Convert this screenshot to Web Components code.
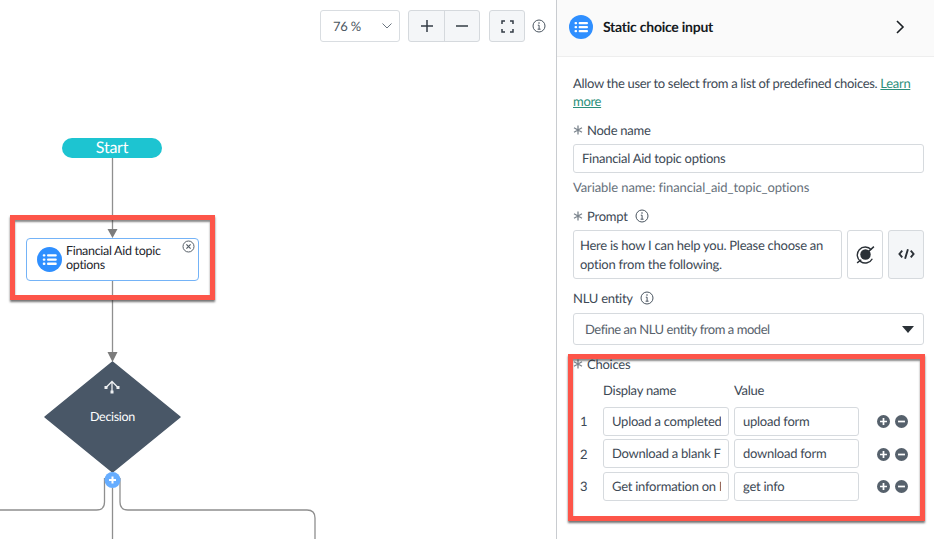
<!DOCTYPE html>
<html>
<head>
<meta charset="utf-8">
<title>Static choice input</title>
<style>
  html, body { margin: 0; height: 539px; overflow: hidden; background: #fff; }
  body { font-family: Lato, Roboto, sans-serif; color: #3d4955; letter-spacing: -0.25px; text-rendering: geometricPrecision; }
</style>
</head>
<body>
<dialog-builder></dialog-builder>
<script>
const LIST_ICON = `
  <svg viewBox="0 0 24 24" width="100%" height="100%">
    <circle cx="12" cy="12" r="12" fill="#2f8fff"/>
    <g fill="#fff">
      <rect x="5.5" y="7" width="2.6" height="2.2" rx="1"/>
      <rect x="5.5" y="11" width="2.6" height="2.2" rx="1"/>
      <rect x="5.5" y="15" width="2.6" height="2.2" rx="1"/>
      <rect x="9.6" y="7" width="9.4" height="2.2" rx="1"/>
      <rect x="9.6" y="11" width="9.4" height="2.2" rx="1"/>
      <rect x="9.6" y="15" width="9.4" height="2.2" rx="1"/>
    </g>
  </svg>`;

const INFO_ICON = `
  <svg viewBox="0 0 14 14" width="14" height="14" fill="none" stroke="#4a5560" stroke-width="1">
    <circle cx="7" cy="7" r="6"/>
    <path d="M5.8 6.2H7.1V10.2M5.6 10.2H8.6" />
    <circle cx="7" cy="4" r=".8" fill="#4a5560" stroke="none"/>
  </svg>`;

const ASTERISK = `
  <svg viewBox="0 0 10 10" width="10" height="10" stroke="#7b848d" stroke-width="1.3">
    <path d="M5 .5V9.5M1 2.7L9 7.3M9 2.7L1 7.3"/>
  </svg>`;

class ZoomToolbar extends HTMLElement {
  constructor() {
    super();
    this.attachShadow({ mode: 'open' });
    this.shadowRoot.innerHTML = `
      <style>
        :host { display: flex; align-items: center; position: absolute; top: 10px; right: 10px; font-size: 13px; color: #4a5560; }
        .zoom {
          box-sizing: border-box; width: 80px; height: 32px; margin-right: 8px;
          border: 1px solid #d9dde1; border-radius: 3px; background: #fff;
          display: flex; align-items: center; justify-content: space-between; padding: 0 6px 0 12px;
        }
        .group { display: flex; height: 32px; box-sizing: border-box; border: 1px solid #d5d9dd; border-radius: 3px; background: #f4f6f8; margin-right: 9px; }
        .btn { box-sizing: border-box; width: 35px; display: flex; align-items: center; justify-content: center; }
        .btn + .btn { border-left: 1px solid #d5d9dd; }
        .info { display: flex; margin-left: 7px; }
      </style>
      <div class="zoom"><span>76 %</span>
        <svg width="12" height="8" viewBox="0 0 12 8" fill="none" stroke="#6b7580" stroke-width="1"><path d="M1.5 1.5L6 6L10.5 1.5"/></svg>
      </div>
      <div class="group">
        <div class="btn"><svg width="14" height="14" viewBox="0 0 14 14" stroke="#333c45" stroke-width="1.5"><path d="M7 1V13M1 7H13"/></svg></div>
        <div class="btn"><svg width="14" height="14" viewBox="0 0 14 14" stroke="#333c45" stroke-width="1.5"><path d="M1 7H13"/></svg></div>
      </div>
      <div class="group" style="margin-right:0;width:36px">
        <div class="btn" style="width:34px"><svg width="13" height="13" viewBox="0 0 13 13" fill="none" stroke="#333c45" stroke-width="1.5"><path d="M1 4V1H4M9 1H12V4M12 9V12H9M4 12H1V9"/></svg></div>
      </div>
      <span class="info">${INFO_ICON}</span>
    `;
  }
}

class FlowNode extends HTMLElement {
  constructor() {
    super();
    this.attachShadow({ mode: 'open' });
    this.shadowRoot.innerHTML = `
      <style>
        :host {
          display: flex; align-items: center; gap: 4px; box-sizing: border-box;
          position: absolute; left: 26px; top: 238px; width: 173px; height: 43px; padding: 0 20px 0 10px;
          background: #fff; border: 1px solid #74b3f7; border-radius: 4px;
          font-size: 12.5px; letter-spacing: -0.3px; line-height: 14px; color: #1d252c;
        }
        .icon { width: 25px; height: 25px; flex: none; }
        .text { margin-top: -3px; }
        .close { position: absolute; right: 3px; top: 1px; width: 13px; height: 13px; }
      </style>
      <span class="icon">${LIST_ICON}</span>
      <span class="text"><slot></slot></span>
      <svg class="close" viewBox="0 0 13 13" fill="none" stroke="#555e67"><circle cx="6.5" cy="6.5" r="5.5"/><path stroke-width="1.2" d="M4.4 4.4L8.6 8.6M8.6 4.4L4.4 8.6"/></svg>
    `;
  }
}

class FlowCanvas extends HTMLElement {
  constructor() {
    super();
    this.attachShadow({ mode: 'open' });
    this.shadowRoot.innerHTML = `
      <style>
        :host { display: block; position: relative; flex: none; width: 556px; height: 539px; background: #fff; overflow: hidden; }
        svg.wires { position: absolute; left: 0; top: 0; }
        .start {
          position: absolute; left: 62px; top: 138px; width: 100px; height: 20px; border-radius: 10px;
          background: #1dc4d1; color: #fff; font-size: 16px; line-height: 19px; text-align: center;
        }
        .label { position: absolute; left: 45px; top: 408px; width: 135px; text-align: center; color: #fff; font-size: 12.5px; letter-spacing: -0.3px; line-height: 18px; }
      </style>
      <svg class="wires" width="556" height="539" fill="none">
        <g stroke="#8f8f8f" stroke-width="1.3">
          <path d="M112.5 157V232M112.5 280V354M112.5 488V539"/>
          <path d="M104.5 478V502Q104.5 510 96.5 510H0"/>
          <path d="M120 478V502Q120 510 128 510H307Q315 510 315 518V539"/>
        </g>
        <path d="M107.5 229L112.5 238L117.5 229ZM107.5 352L112.5 362L117.5 352Z" fill="#7c7c7c"/>
        <path d="M112.5 362L180 417L112.5 472L45 417Z" fill="#495767" stroke="#495767" stroke-width="1.5" stroke-linejoin="round"/>
        <g stroke="#eef0f2" stroke-width="1.3" fill="none">
          <path d="M112 381V392M106 387.5L112 381.5L118 387.5"/>
        </g>
        <g fill="#eef0f2">
          <rect x="104.5" y="386" width="3" height="3"/><rect x="116.5" y="386" width="3" height="3"/><rect x="110.5" y="390.5" width="3" height="3"/>
        </g>
        <circle cx="112.5" cy="480" r="8" fill="#66adff"/>
        <path d="M112.5 476.5V483.5M109 480H116" stroke="#fff" stroke-width="2"/>
      </svg>
      <div class="start">Start</div>
      <div class="label">Decision</div>
      <flow-node>Financial Aid topic options</flow-node>
      <call-out style="left:10px;top:215px;width:205px;height:85px"></call-out>
      <zoom-toolbar></zoom-toolbar>
    `;
  }
}

class CallOut extends HTMLElement {
  constructor() {
    super();
    this.attachShadow({ mode: 'open' });
    this.shadowRoot.innerHTML = `
      <style>
        :host {
          display: block; position: absolute; box-sizing: border-box; pointer-events: none;
          border: 5px solid #fd5549; box-shadow: 0 2px 2px rgba(40,40,40,.65), inset 0 2px 2px rgba(40,40,40,.55);
        }
      </style>`;
  }
}

class FormLabel extends HTMLElement {
  constructor() {
    super();
    this.attachShadow({ mode: 'open' });
    this.shadowRoot.innerHTML = `
      <style>
        :host { display: flex; align-items: center; font-size: 13px; line-height: 18px; color: #3d4955; }
        .req { display: none; margin-right: 4px; }
        :host([required]) .req { display: flex; }
        .info { display: none; margin-left: 7px; }
        :host([info]) .info { display: flex; }
      </style>
      <span class="req">${ASTERISK}</span><slot></slot><span class="info">${INFO_ICON}</span>
    `;
  }
}

class TextBox extends HTMLElement {
  constructor() {
    super();
    this.attachShadow({ mode: 'open' });
    this.shadowRoot.innerHTML = `
      <style>
        :host {
          display: block; box-sizing: border-box; background: #fff; border: 1px solid #d6dade; border-radius: 3px;
          padding: 5px 7px 5px 8px; font-size: 13px; line-height: 17px; color: #3d4955;
        }
        :host([single]) .clip { white-space: nowrap; overflow: hidden; }
      </style>
      <div class="clip"><slot></slot></div>
    `;
  }
}

class ChoiceRow extends HTMLElement {
  constructor() {
    super();
    this.attachShadow({ mode: 'open' });
    const sign = d => `<svg width="13" height="13" viewBox="0 0 12 12"><circle cx="6" cy="6" r="6" fill="#56616c"/><path d="${d}" stroke="#fff" stroke-width="1.6"/></svg>`;
    this.shadowRoot.innerHTML = `
      <style>
        :host { display: grid; grid-template-columns: 30px 126px 130px 18px 13px 5px 13px; align-items: center; height: 29px; font-size: 13px; color: #3d4955; }
        .num { padding-left: 7px; }
        text-box { height: 29px; }
        .val { margin-left: 5px; }
        svg { display: block; margin-top: 1px; }
        .a { grid-column: 5; }
        .b { grid-column: 7; }
      </style>
      <span class="num">${this.getAttribute('num')}</span>
      <text-box single>${this.getAttribute('name')}</text-box>
      <text-box single class="val">${this.getAttribute('value')}</text-box>
      <span class="a">${sign('M6 2.8V9.2M2.8 6H9.2')}</span>
      <span class="b">${sign('M2.8 6H9.2')}</span>
    `;
  }
}

class SidePanel extends HTMLElement {
  constructor() {
    super();
    this.attachShadow({ mode: 'open' });
    this.shadowRoot.innerHTML = `
      <style>
        :host {
          display: block; position: relative; flex: 1; box-sizing: border-box; height: 539px;
          border-left: 1px solid #c9ccd0; background: #fff; color: #3d4955; font-size: 13px;
        }
        header {
          display: flex; align-items: center; box-sizing: border-box; height: 57px; padding: 0 29px 2px 12px;
          background: #fafafa; border-bottom: 1px solid #eeeeee;
        }
        .h-icon { width: 24px; height: 24px; margin-right: 10px; }
        h1 { flex: 1; margin: -2px 0 0; font-size: 14px; font-weight: 700; color: #15191d; }
        .body { padding: 16.6px 10px 0 16px; }
        p { margin: 0 0 11.4px; font-size: 13px; line-height: 18px; letter-spacing: -0.31px; }
        a { color: #2c8f7b; text-decoration: underline; }
        .hint { margin: 5px 0 11px; line-height: 18px; color: #67717b; letter-spacing: -0.1px; }
        form-label { margin-bottom: 5px; }
        .prompt { display: flex; margin-bottom: 10px; }
        .prompt text-box { flex: 1; height: 49px; line-height: 19px; padding: 5px 6px 3px; }
        .tool { box-sizing: border-box; width: 36px; height: 49px; margin-left: 5px; border: 1px solid #d6dade; border-radius: 3px; display: flex; align-items: center; justify-content: center; }
        .tool.code { background: #f4f6f8; }
        .select { height: 32px; padding: 7px 9px 0 11px; margin: 6px 0 10px; color: #58626c; letter-spacing: -0.45px; }
        .select div { display: flex; justify-content: space-between; align-items: center; }
        .heads { display: grid; grid-template-columns: 30px 131px 1fr; line-height: 18px; margin: 8px 0 8px; }
        .rows { display: flex; flex-direction: column; gap: 3.5px; }
      </style>
      <header>
        <span class="h-icon">${LIST_ICON}</span>
        <h1>Static choice input</h1>
        <svg width="10" height="14" viewBox="0 0 10 14" fill="none" stroke="#1a1f24" stroke-width="1.6"><path d="M2 1L8 7L2 13"/></svg>
      </header>
      <div class="body">
        <p>Allow the user to select from a list of predefined choices. <a>Learn more</a></p>
        <form-label required>Node name</form-label>
        <text-box single style="height:29px">Financial Aid topic options</text-box>
        <div class="hint">Variable name: financial_aid_topic_options</div>
        <form-label required info>Prompt</form-label>
        <div class="prompt">
          <text-box>Here is how I can help you. Please choose an option from the following.</text-box>
          <div class="tool">
            <svg width="21" height="21" viewBox="0 0 20 20" fill="none" stroke="#2b3137" stroke-width="1.3">
              <circle cx="10" cy="10" r="5" fill="#2b3137" stroke="none"/>
              <path d="M15.5 5.5A7.6 7.6 0 1 0 16.5 14"/>
              <path d="M12 8L18 2.5M2 18L6 15" stroke-width="1.4"/>
            </svg>
          </div>
          <div class="tool code">
            <svg width="17" height="12" viewBox="0 0 18 12" fill="none" stroke="#2b3137" stroke-width="2"><path d="M4.5 2.5L1.5 6L4.5 9.5M13.5 2.5L16.5 6L13.5 9.5M10.5 1L7.5 11"/></svg>
          </div>
        </div>
        <form-label info style="margin-bottom:0">NLU entity</form-label>
        <text-box class="select"><div><span>Define an NLU entity from a model</span>
          <svg width="12" height="7" viewBox="0 0 12 7"><path d="M0 0H12L6 7Z" fill="#2b3137"/></svg></div>
        </text-box>
        <form-label required style="margin-bottom:0">Choices</form-label>
        <div class="heads"><span></span><span>Display name</span><span>Value</span></div>
        <div class="rows">
          <choice-row num="1" name="Upload a completed" value="upload form"></choice-row>
          <choice-row num="2" name="Download a blank Fi" value="download form"></choice-row>
          <choice-row num="3" name="Get information on F" value="get info"></choice-row>
        </div>
      </div>
      <call-out style="left:11px;top:354px;width:357px;height:167px"></call-out>
    `;
  }
}

class DialogBuilder extends HTMLElement {
  constructor() {
    super();
    this.attachShadow({ mode: 'open' });
    this.shadowRoot.innerHTML = `
      <style>:host { display: flex; width: 934px; height: 539px; overflow: hidden; }</style>
      <flow-canvas></flow-canvas>
      <side-panel></side-panel>
    `;
  }
}

customElements.define('call-out', CallOut);
customElements.define('zoom-toolbar', ZoomToolbar);
customElements.define('flow-node', FlowNode);
customElements.define('flow-canvas', FlowCanvas);
customElements.define('form-label', FormLabel);
customElements.define('text-box', TextBox);
customElements.define('choice-row', ChoiceRow);
customElements.define('side-panel', SidePanel);
customElements.define('dialog-builder', DialogBuilder);
</script>
</body>
</html>
